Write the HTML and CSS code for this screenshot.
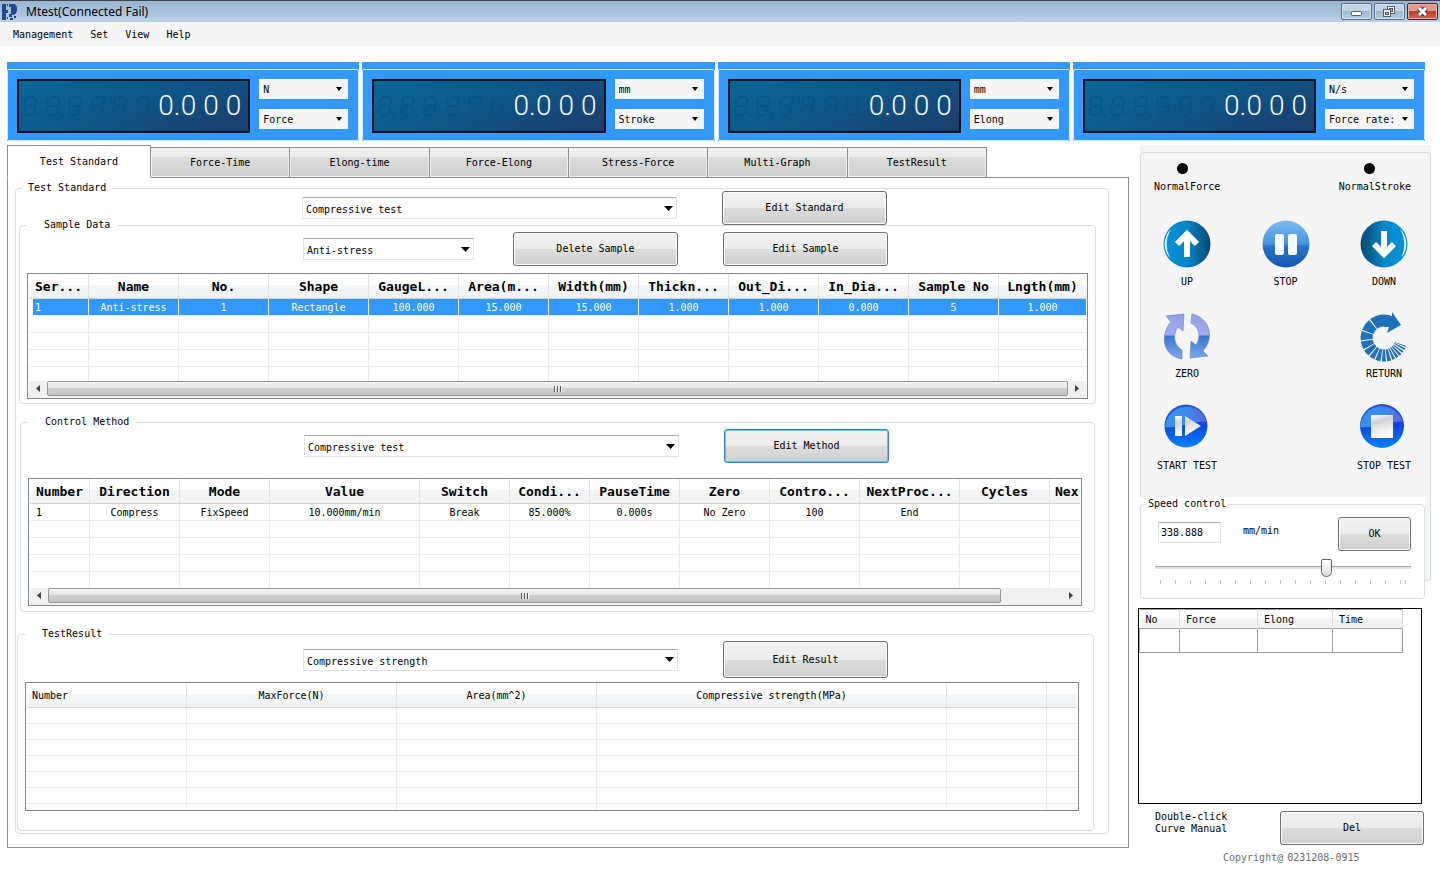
FILE: index.html
```html
<!DOCTYPE html>
<html lang="en">
<head>
  <meta charset="utf-8">
  <title>Mtest(Connected Fail)</title>
  <link rel="stylesheet" href="styles.css">
</head>
<body>

  <!-- shared shapes -->
  <svg class="defs" width="0" height="0" aria-hidden="true">
    <defs>
      <linearGradient id="teal" x1="0" x2="1"><stop offset="0" stop-color="#0795dc"/><stop offset=".5" stop-color="#0586c6"/><stop offset="1" stop-color="#07486f"/></linearGradient>
      <linearGradient id="tealBack" x1="1" x2="0"><stop offset="0" stop-color="#0795dc"/><stop offset=".5" stop-color="#0586c6"/><stop offset="1" stop-color="#07486f"/></linearGradient>
      <linearGradient id="sky" x1="0" y1="0" x2="0" y2="1"><stop offset="0" stop-color="#7dbcf2"/><stop offset=".5" stop-color="#4a92dc"/><stop offset=".55" stop-color="#2b74c9"/><stop offset="1" stop-color="#1558ac"/></linearGradient>
      <linearGradient id="royal" x1="0" y1="0" x2="0" y2="1"><stop offset="0" stop-color="#2a55d8"/><stop offset=".5" stop-color="#0b46dc"/><stop offset="1" stop-color="#0a84fa"/></linearGradient>
      <linearGradient id="gloss" x1="0" y1="0" x2="1" y2="0"><stop offset="0" stop-color="#3a93f0"/><stop offset=".6" stop-color="#3f86ea"/><stop offset="1" stop-color="#5b63de"/></linearGradient>
      <linearGradient id="silver" x1="0" y1="0" x2=".3" y2="1"><stop offset="0" stop-color="#ffffff"/><stop offset=".35" stop-color="#d2d4d4"/><stop offset=".6" stop-color="#e2e4e6"/><stop offset="1" stop-color="#ffffff"/></linearGradient>
      <linearGradient id="lilac" gradientUnits="userSpaceOnUse" x1="0" y1="0" x2="0" y2="48"><stop offset="0" stop-color="#8f9fea"/><stop offset=".48" stop-color="#a5acee"/><stop offset=".5" stop-color="#3878cf"/><stop offset="1" stop-color="#86abea"/></linearGradient>
    </defs>
    <symbol id="unlit" viewBox="0 0 20 22">
      <g fill="none" stroke="#0a4f7d" stroke-width="2">
        <path d="M4 2h8M3 11h8M2 20h8M2 3l-.5 7M13 3l-.5 7M1.500 12l-.5 7M12 12l-.5 7"/>
      </g>
      <circle cx="16" cy="20" r="1.500" fill="#0a4f7d"/>
    </symbol>
  </svg>

  <header class="titlebar">
    <svg class="logo" viewBox="0 0 16 16"><path fill="#24478f" d="M0 0h4v6h2v3H4v7H0zM7 0h4c3 0 4 2 4 5s-1 6-5 6v2H7v-3h2V3H7zM5 0h1v2H5zM5 13h1v2H5zM8 14h3v2H8zM12 12h2v2h-2z"/></svg>
    <h1 class="title">Mtest(Connected Fail)</h1>
    <div class="window-buttons">
      <button class="win" aria-label="Minimize"><svg viewBox="0 0 29 15"><rect x="9.500" y="7.500" width="10" height="4" rx="1" fill="#fff" stroke="#555e6c"/></svg></button>
      <button class="win" aria-label="Restore"><svg viewBox="0 0 29 15"><g fill="#fff" stroke="#555e6c"><rect x="12.500" y="2.500" width="7" height="7"/><rect x="14.500" y="4.500" width="3" height="3" fill="#9db6d0"/><rect x="8.500" y="5.500" width="7" height="7"/><rect x="10.500" y="8.500" width="3" height="2" fill="#9db6d0"/></g></svg></button>
      <button class="win close" aria-label="Close"><svg viewBox="0 0 29 15"><path d="M11 4l7 7M18 4l-7 7" stroke="#4b3b45" stroke-width="5"/><path d="M11 4l7 7M18 4l-7 7" stroke="#fff" stroke-width="3"/></svg></button>
    </div>
  </header>

  <nav class="menu">
    <a href="#">Management</a>
    <a href="#">Set</a>
    <a href="#">View</a>
    <a href="#">Help</a>
  </nav>

  <section class="meters">
    <div class="meter">
      <div class="meter-body">
        <div class="lcd">
          <svg><use href="#unlit"/></svg><svg><use href="#unlit"/></svg><svg><use href="#unlit"/></svg><svg><use href="#unlit"/></svg><svg><use href="#unlit"/></svg><svg><use href="#unlit"/></svg>
          <span>0.</span><span>0</span><span>0</span><span>0</span>
        </div>
        <div class="meter-selects">
          <select aria-label="Force unit"><option>N</option></select>
          <select aria-label="Channel 1"><option>Force</option></select>
        </div>
      </div>
    </div>
    <div class="meter">
      <div class="meter-body">
        <div class="lcd">
          <svg><use href="#unlit"/></svg><svg><use href="#unlit"/></svg><svg><use href="#unlit"/></svg><svg><use href="#unlit"/></svg><svg><use href="#unlit"/></svg><svg><use href="#unlit"/></svg>
          <span>0.</span><span>0</span><span>0</span><span>0</span>
        </div>
        <div class="meter-selects">
          <select aria-label="Stroke unit"><option>mm</option></select>
          <select aria-label="Channel 2"><option>Stroke</option></select>
        </div>
      </div>
    </div>
    <div class="meter">
      <div class="meter-body">
        <div class="lcd">
          <svg><use href="#unlit"/></svg><svg><use href="#unlit"/></svg><svg><use href="#unlit"/></svg><svg><use href="#unlit"/></svg><svg><use href="#unlit"/></svg><svg><use href="#unlit"/></svg>
          <span>0.</span><span>0</span><span>0</span><span>0</span>
        </div>
        <div class="meter-selects">
          <select aria-label="Elong unit"><option>mm</option></select>
          <select aria-label="Channel 3"><option>Elong</option></select>
        </div>
      </div>
    </div>
    <div class="meter">
      <div class="meter-body">
        <div class="lcd">
          <svg><use href="#unlit"/></svg><svg><use href="#unlit"/></svg><svg><use href="#unlit"/></svg><svg><use href="#unlit"/></svg><svg><use href="#unlit"/></svg><svg><use href="#unlit"/></svg>
          <span>0.</span><span>0</span><span>0</span><span>0</span>
        </div>
        <div class="meter-selects">
          <select aria-label="Rate unit"><option>N/s</option></select>
          <select aria-label="Channel 4"><option>Force rate:</option></select>
        </div>
      </div>
    </div>
  </section>

  <div class="content">
    <main>
      <div class="tabs">
        <button class="tab active">Test Standard</button>
        <button class="tab">Force-Time</button>
        <button class="tab">Elong-time</button>
        <button class="tab">Force-Elong</button>
        <button class="tab">Stress-Force</button>
        <button class="tab">Multi-Graph</button>
        <button class="tab">TestResult</button>
      </div>

      <div class="tab-page">
        <fieldset class="group standard">
          <legend>Test Standard</legend>
          <div class="row">
            <div class="pick"><select class="wide" aria-label="Test standard"><option>Compressive test</option></select></div>
            <button class="btn">Edit Standard</button>
          </div>

          <fieldset class="group sample">
            <legend>Sample Data</legend>
            <div class="row">
              <div class="pick">
                <select class="narrow" aria-label="Sample"><option>Anti-stress</option></select>
                <button class="btn">Delete Sample</button>
              </div>
              <button class="btn">Edit Sample</button>
            </div>
            <div class="list">
              <div class="view">
                <table>
                  <colgroup><col class="w60"><col class="w90"><col class="w90"><col class="w100"><col class="w90"><col class="w90"><col class="w90"><col class="w90"><col class="w90"><col class="w90"><col class="w90"><col></colgroup>
                  <tr><th>Ser...</th><th>Name</th><th>No.</th><th>Shape</th><th>GaugeL...</th><th>Area(m...</th><th>Width(mm)</th><th>Thickn...</th><th>Out_Di...</th><th>In_Dia...</th><th>Sample No</th><th>Lngth(mm)</th></tr>
                  <tr class="selected"><td>1</td><td>Anti-stress</td><td>1</td><td>Rectangle</td><td>100.000</td><td>15.000</td><td>15.000</td><td>1.000</td><td>1.000</td><td>0.000</td><td>5</td><td>1.000</td></tr>
                  <tr><td></td><td></td><td></td><td></td><td></td><td></td><td></td><td></td><td></td><td></td><td></td><td></td></tr>
                  <tr><td></td><td></td><td></td><td></td><td></td><td></td><td></td><td></td><td></td><td></td><td></td><td></td></tr>
                  <tr><td></td><td></td><td></td><td></td><td></td><td></td><td></td><td></td><td></td><td></td><td></td><td></td></tr>
                  <tr><td></td><td></td><td></td><td></td><td></td><td></td><td></td><td></td><td></td><td></td><td></td><td></td></tr>
                </table>
              </div>
              <div class="scrollbar">
                <svg viewBox="0 0 18 15"><path d="M11 4v7L7 7.500z"/></svg>
                <div class="track"><div class="thumb full"><i></i><i></i><i></i></div></div>
                <svg viewBox="0 0 18 15"><path d="M7 4v7l4-3.500z"/></svg>
              </div>
            </div>
          </fieldset>

          <fieldset class="group method">
            <legend>Control Method</legend>
            <div class="row">
              <div class="pick"><select class="wide" aria-label="Control method"><option>Compressive test</option></select></div>
              <button class="btn focused">Edit Method</button>
            </div>
            <div class="list">
              <div class="view">
                <table>
                  <colgroup><col class="w60"><col class="w90"><col class="w90"><col class="w150"><col class="w90"><col class="w80"><col class="w90"><col class="w90"><col class="w90"><col class="w100"><col class="w90"><col></colgroup>
                  <tr><th>Number</th><th>Direction</th><th>Mode</th><th>Value</th><th>Switch</th><th>Condi...</th><th>PauseTime</th><th>Zero</th><th>Contro...</th><th>NextProc...</th><th>Cycles</th><th class="cut">Nex</th></tr>
                  <tr><td>1</td><td>Compress</td><td>FixSpeed</td><td>10.000mm/min</td><td>Break</td><td>85.000%</td><td>0.000s</td><td>No Zero</td><td>100</td><td>End</td><td></td><td></td></tr>
                  <tr><td></td><td></td><td></td><td></td><td></td><td></td><td></td><td></td><td></td><td></td><td></td><td></td></tr>
                  <tr><td></td><td></td><td></td><td></td><td></td><td></td><td></td><td></td><td></td><td></td><td></td><td></td></tr>
                  <tr><td></td><td></td><td></td><td></td><td></td><td></td><td></td><td></td><td></td><td></td><td></td><td></td></tr>
                  <tr><td></td><td></td><td></td><td></td><td></td><td></td><td></td><td></td><td></td><td></td><td></td><td></td></tr>
                </table>
              </div>
              <div class="scrollbar">
                <svg viewBox="0 0 18 15"><path d="M11 4v7L7 7.500z"/></svg>
                <div class="track"><div class="thumb"><i></i><i></i><i></i></div></div>
                <svg viewBox="0 0 18 15"><path d="M7 4v7l4-3.500z"/></svg>
              </div>
            </div>
          </fieldset>

          <fieldset class="group result">
            <legend>TestResult</legend>
            <div class="row">
              <div class="pick"><select class="wide" aria-label="Test result"><option>Compressive strength</option></select></div>
              <button class="btn">Edit Result</button>
            </div>
            <div class="list">
              <div class="view">
                <table>
                  <colgroup><col class="w160"><col class="w210"><col class="w200"><col class="w350"><col class="w100"><col></colgroup>
                  <tr><th>Number</th><th>MaxForce(N)</th><th>Area(mm^2)</th><th>Compressive strength(MPa)</th><th></th><th></th></tr>
                  <tr><td></td><td></td><td></td><td></td><td></td><td></td></tr>
                  <tr><td></td><td></td><td></td><td></td><td></td><td></td></tr>
                  <tr><td></td><td></td><td></td><td></td><td></td><td></td></tr>
                  <tr><td></td><td></td><td></td><td></td><td></td><td></td></tr>
                  <tr><td></td><td></td><td></td><td></td><td></td><td></td></tr>
                  <tr><td></td><td></td><td></td><td></td><td></td><td></td></tr>
                  <tr><td></td><td></td><td></td><td></td><td></td><td></td></tr>
                </table>
              </div>
            </div>
          </fieldset>
        </fieldset>
      </div>
    </main>

    <aside>
      <section class="controls">
        <div class="controls-box">
          <div class="lamps">
            <div class="lamp"><i></i>NormalForce</div>
            <div class="lamp"><i></i>NormalStroke</div>
          </div>
          <div class="actions">
            <button class="action">
              <svg viewBox="0 0 48 48"><circle cx="24" cy="24" r="23.500" fill="url(#teal)"/><path d="M8 9a21 21 0 0 0-1 29a30 30 0 0 1 1-29z" fill="#e8f6ff"/><path d="M24 14v23M14 24l10-10 10 10" fill="none" stroke="#fff" stroke-width="6"/></svg>
              UP
            </button>
            <button class="action">
              <svg viewBox="0 0 48 48"><circle cx="24" cy="24" r="23.500" fill="url(#sky)"/><rect x="13" y="14" width="9" height="21" rx="2" fill="#f4faff"/><rect x="26" y="14" width="9" height="21" rx="2" fill="#f4faff"/></svg>
              STOP
            </button>
            <button class="action">
              <svg viewBox="0 0 48 48"><circle cx="24" cy="24" r="23.500" fill="url(#tealBack)"/><path d="M40 9a21 21 0 0 1 1 29a30 30 0 0 0-1-29z" fill="#e8f6ff"/><path d="M24 11v23M14 24l10 10 10-10" fill="none" stroke="#fff" stroke-width="6"/></svg>
              DOWN
            </button>

            <button class="action">
              <svg viewBox="0 0 48 48"><g fill="url(#lilac)" stroke="#6b8ad6" stroke-width=".7"><path d="M3 4l18-2-1 17-5-4c-5 6-5 18 4 23v9C-1 44-3 22 8 10z"/><path d="M29 2c18 4 23 24 11 37l5 5-18 2 1-17 5 4c5-7 4-18-5-22z"/></g></svg>
              ZERO
            </button>
            <span></span>
            <button class="action">
              <svg viewBox="0 0 48 48"><path d="M29 9.200A17.500 17.500 0 1 0 40.500 32" fill="none" stroke="#1f72ba" stroke-width="12" stroke-dasharray="16 1 9 1 7 1 6 1 5 1 4 1 4 1 3 1 3 1 2 1 2 1 2 1 1.500 1 1.500 1"/><path d="M32 0l9 13-14 8 2-6h-5V4h8z" fill="#1f72ba"/></svg>
              RETURN
            </button>

            <button class="action">
              <svg viewBox="0 0 48 48"><circle cx="23" cy="22" r="21.500" fill="url(#royal)"/><path d="M2 23a21.500 21.500 0 0 1 42-5c-14-2-26 7-42 5z" fill="url(#gloss)"/><path d="M12 12h7v20h-7zM22 12l16 10-16 10z" fill="url(#silver)"/></svg>
              START TEST
            </button>
            <span></span>
            <button class="action">
              <svg viewBox="0 0 48 48"><circle cx="22" cy="22" r="22" fill="url(#royal)"/><path d="M0 23a22 22 0 0 1 43-5c-14-2-27 7-43 5z" fill="url(#gloss)"/><path d="M11 11h22v23H11z" fill="url(#silver)"/></svg>
              STOP TEST
            </button>
          </div>
        </div>
      </section>

      <section class="speed">
        <fieldset class="group">
          <legend>Speed control</legend>
          <div class="speed-row">
            <input type="text" id="speed" value="338.888">
            <label for="speed">mm/min</label>
            <button class="btn small">OK</button>
          </div>
          <input type="range" class="slider" aria-label="Speed" min="0" max="500" value="339">
          <div class="ticks"></div>
        </fieldset>
      </section>

      <div class="history">
        <table>
          <colgroup><col class="c-no"><col class="c-force"><col class="c-elong"><col></colgroup>
          <tr><th>No</th><th>Force</th><th>Elong</th><th>Time</th></tr>
          <tr><td></td><td></td><td></td><td></td></tr>
        </table>
      </div>

      <div class="history-foot">
        <p>Double-click<br>Curve Manual</p>
        <button class="btn">Del</button>
      </div>
      <footer><span>Copyright@</span><span>0231208-0915</span></footer>
    </aside>
  </div>

</body>
</html>
```
FILE: styles.css
```css
* {
  box-sizing: border-box;
}

body {
  margin: 0;
  background: #fff;
  color: #000;
  font: 10px/14px "DejaVu Sans Mono", "Liberation Mono", monospace;
}

button,
select,
input {
  font: inherit;
  color: inherit;
  margin: 0;
}

.defs {
  position: absolute;
}

/* title bar */
.titlebar {
  display: flex;
  align-items: center;
  height: 22px;
  padding: 0 2px;
  border-top: 1px solid #3c4654;
  background: linear-gradient(#9ab4cf, #b9d1ea);
}

.logo {
  width: 16px;
  height: 16px;
}

.title {
  flex: 1;
  margin: 0 0 0 8px;
  font: 12px/20px "Noto Sans", "Open Sans", sans-serif;
}

.window-buttons {
  display: flex;
  gap: 2px;
}

.win {
  width: 31px;
  height: 17px;
  padding: 0;
  border: 1px solid #56708f;
  border-radius: 2px;
  background: linear-gradient(#c3d4e6 50%, #9fb9d3 50%, #b5cde4);
  box-shadow: inset 0 0 0 1px #d5e2ef;
}

.win svg {
  display: block;
}

.win.close {
  border-color: #541f26;
  background: linear-gradient(#dd9a8e 45%, #b8402b 50%, #cf6a4c);
  box-shadow: inset 0 0 0 1px #e5b0a5;
}

.menu {
  display: flex;
  gap: 17px;
  padding: 6px 13px 4px;
  background: #f5f5f5;
}

.menu a {
  color: #000;
  text-decoration: none;
}

/* meters */
.meters {
  display: grid;
  grid-template-columns: repeat(4, 1fr);
  gap: 3px;
  padding: 16px 15px 4px 7px;
}

.meter {
  padding-top: 7px;
  background: #3399ff;
}

.meter-body {
  display: flex;
  gap: 9px;
  padding: 9px 10px 7px 9px;
  border: 1px solid #d3e9ff;
  border-radius: 2px;
}

.lcd {
  flex: 1;
  display: grid;
  grid-template-columns: repeat(10, 1fr);
  align-items: center;
  height: 54px;
  padding: 0 0 0 4px;
  border: 2px solid #06121f;
  background: linear-gradient(160deg, #076796, #0e5587 50%, #1d3c6c);
}

.lcd svg {
  width: 20px;
  height: 22px;
  opacity: .6;
}

.lcd span {
  color: #f2fbff;
  font: 300 28px/50px Roboto, sans-serif;
}

.meter-selects {
  display: flex;
  flex-direction: column;
  gap: 10px;
}

/* drop-downs */
select {
  appearance: none;
  border: 0;
  border-radius: 0;
  background: #fff url("data:image/svg+xml,%3Csvg xmlns='http://www.w3.org/2000/svg' width='9' height='5'%3E%3Cpath d='M0 0h9L4.500 5z'/%3E%3C/svg%3E") no-repeat right 3px center;
}

.meter-selects select {
  width: 89px;
  height: 20px;
  padding: 1px 18px 0 4px;
  background-color: #f5f5f5;
  background-size: 6px 4px;
  background-position: right 6px center;
}

.wide,
.narrow {
  height: 22px;
  padding: 4px 16px 0 3px;
  border: 1px solid #dfe2e8;
  border-top-color: #abadb3;
  border-radius: 1px;
}

.wide {
  width: 375px;
}

.narrow {
  width: 171px;
}

/* buttons */
.btn {
  width: 165px;
  height: 34px;
  padding: 0;
  border: 1px solid #707070;
  border-radius: 3px;
  background: linear-gradient(#f2f2f2, #ebebeb 50%, #dddddd 50%, #cfcfcf);
  box-shadow: inset 0 0 0 1px #fbfbfb;
}

.btn.focused {
  border-color: #3c7fb1;
  box-shadow: inset 0 0 0 1px #48d0f4;
}

.btn.small {
  width: 73px;
}

/* page columns */
.content {
  display: grid;
  grid-template-columns: minmax(0, 1fr) 293px;
  gap: 9px;
  align-items: start;
  padding: 0 9px 0 7px;
}

.tabs {
  position: relative;
  z-index: 1;
  display: flex;
  align-items: flex-end;
  width: 980px;
  height: 33px;
}

.tab {
  flex: 1;
  height: 31px;
  padding: 0;
  border: 1px solid #8c8e94;
  border-left-width: 0;
  background: linear-gradient(#f3f3f3, #ebebeb 30%, #dcdcdc 30%, #cfcfcf);
  box-shadow: inset 0 0 0 1px #f0f0f0;
}

.tab.active {
  flex: 0 0 144px;
  height: 33px;
  border-left-width: 1px;
  border-bottom-color: #fff;
  background: #fff;
  box-shadow: none;
}

.tab-page {
  margin-top: -1px;
  padding: 3px 19px 13px 7px;
  border: 1px solid #8c8e94;
}

/* group boxes */
.group {
  min-width: 0;
  margin: 0;
  padding: 0 7px;
  border: 1px solid #d5dfe5;
  border-radius: 4px;
}

.group legend {
  padding: 0 7px 0 17px;
}

.standard {
  padding: 0 0 2px;
}

.standard > legend {
  margin-left: 6px;
  padding: 0 6px;
}

.row {
  display: flex;
  align-items: center;
  gap: 45px;
  padding-left: 276px;
}

.standard > .row {
  position: relative;
  margin: -4px 0 -7px;
  padding-left: 286px;
}

.pick {
  display: flex;
  align-items: center;
  justify-content: space-between;
  width: 375px;
}

.sample {
  margin: 0 12px 0 3px;
  padding-bottom: 4px;
}

.method {
  margin: 11px 13px 0 4px;
  padding: 0 12px 5px 7px;
}

.result {
  margin: 15px 14px 0 1px;
  padding: 0 14px 19px 7px;
}

.result .row {
  padding-left: 278px;
}

/* list views */
.list {
  margin-top: 7px;
  padding: 0 1px;
  border: 1px solid #828790;
}

.method .list {
  margin-top: 15px;
}

.result .list {
  margin-top: 4px;
}

.result .btn {
  height: 37px;
}

.view {
  height: 107px;
  overflow: hidden;
}

.method .view {
  height: 109px;
}

.result .view {
  height: 127px;
}

.list table {
  width: 100%;
  table-layout: fixed;
  border-collapse: separate;
  border-spacing: 0;
}

.list th {
  height: 25px;
  padding: 2px 0 0;
  border-right: 1px solid #e3e4e6;
  border-bottom: 1px solid #d5d5d5;
  background: linear-gradient(#fff 45%, #f5f6f8 45%, #f1f2f4);
  font-size: 13px;
  white-space: nowrap;
}

.list .cut {
  padding-left: 5px;
  text-align: left;
}

.list td {
  height: 17px;
  padding: 1px 0 0;
  border-right: 1px solid #ececec;
  border-bottom: 1px solid #ececec;
  line-height: 15px;
  text-align: center;
}

.list td:first-child {
  padding-left: 6px;
  text-align: left;
}

.list tr :last-child {
  border-right: 0;
}

.result .list th {
  font-size: 10px;
  font-weight: normal;
}

.result .list th:first-child {
  padding-left: 5px;
  text-align: left;
}

.result .list td {
  height: 16px;
}

.selected td {
  background: #3399ff;
  color: #fff;
}

.list .selected td:first-child {
  padding-left: 2px;
  border-left: 4px solid #fff;
}

.w60 { width: 60px; }
.w80 { width: 80px; }
.w90 { width: 90px; }
.w100 { width: 100px; }
.w150 { width: 150px; }
.w160 { width: 160px; }
.w200 { width: 200px; }
.w210 { width: 210px; }
.w350 { width: 350px; }

.scrollbar {
  display: flex;
  height: 17px;
  padding-bottom: 2px;
  background: #f0f0f0;
}

.scrollbar svg {
  width: 18px;
  height: 15px;
  fill: #404040;
}

.track {
  flex: 1;
}

.thumb {
  display: flex;
  align-items: center;
  justify-content: center;
  gap: 1px;
  width: 94%;
  height: 15px;
  border: 1px solid #979797;
  border-radius: 2px;
  background: linear-gradient(#f4f4f4, #e6e6e6 45%, #cfcfcf 50%, #c6c6c6);
}

.thumb.full {
  width: 100%;
}

.thumb i {
  width: 2px;
  height: 6px;
  border-left: 1px solid #5a5a5a;
  background: #fafafa;
}

/* machine controls */
.controls {
  margin-left: 2px;
  padding-top: 7px;
  background: #f5f5f5;
}

.controls-box {
  padding: 10px 0 107px;
  border: 1px solid #d5dbe3;
  border-radius: 4px;
}

.lamps {
  display: flex;
  justify-content: space-between;
  padding: 0 19px 0 13px;
}

.lamp {
  display: flex;
  flex-direction: column;
  align-items: center;
  gap: 6px;
}

.lamp i {
  width: 11px;
  height: 11px;
  margin-right: 10px;
  border-radius: 50%;
  background: #000;
}

.actions {
  display: grid;
  grid-template-columns: 92px 1fr 92px;
  row-gap: 23px;
  margin-top: 26px;
}

.action {
  display: flex;
  flex-direction: column;
  align-items: center;
  gap: 7px;
  padding: 0;
  border: 0;
  background: none;
}

.action svg {
  width: 48px;
  height: 48px;
  overflow: visible;
}

.speed {
  position: relative;
  margin: -84px 6px 0 2px;
  background: #fff;
}

.speed .group {
  padding: 0 13px 14px 14px;
}

.speed legend {
  margin-left: -9px;
  padding: 0 2px;
}

.speed-row {
  display: flex;
  align-items: flex-start;
  padding: 6px 0 0 3px;
}

.speed-row label {
  padding-top: 7px;
}

.speed-row input {
  width: 63px;
  height: 21px;
  margin: 5px 22px 0 0;
  padding: 0 2px;
  border: 1px solid #dfe6ec;
  border-top-color: #abadb3;
}

.speed-row .btn {
  margin-left: auto;
}

.slider {
  appearance: none;
  display: block;
  width: 100%;
  height: 18px;
  margin-top: 8px;
  background: linear-gradient(#a0a0a0, #a0a0a0) 0 7px / 100% 1px no-repeat, linear-gradient(#e3e3e3, #e3e3e3) 0 8px / 100% 2px no-repeat;
}

.slider::-webkit-slider-thumb {
  appearance: none;
  width: 11px;
  height: 18px;
  border: 1px solid #5f6468;
  border-radius: 2px 2px 6px 6px;
  background: linear-gradient(#fff, #dcdcdc);
}

.ticks {
  height: 4px;
  margin: 3px 5px 0;
  background: linear-gradient(#c4c4c4, #c4c4c4) right / 1px 100% no-repeat, repeating-linear-gradient(90deg, #c4c4c4 0 1px, transparent 1px 15px);
}

/* history */
.history {
  min-height: 196px;
  margin: 9px 9px 0 0;
  padding-right: 18px;
  border: 1px solid #000;
}

.history table {
  width: 100%;
  table-layout: fixed;
  border-collapse: collapse;
}

.history th {
  height: 19px;
  padding: 2px 0 0 6px;
  border-top: 1px solid #a0a0a0;
  border-right: 1px solid #dcdcdc;
  background: linear-gradient(#fff 45%, #f4f5f7 45%, #f1f2f4);
  font-weight: normal;
  text-align: left;
}

.history td {
  height: 24px;
  border: 1px solid #a0a0a0;
}

.c-no { width: 40px; }
.c-force { width: 78px; }
.c-elong { width: 75px; }

.history-foot {
  display: flex;
  justify-content: space-between;
  align-items: flex-start;
  padding: 7px 7px 0 17px;
}

.history-foot p {
  margin: 0;
  line-height: 12px;
}

.history-foot .btn {
  width: 144px;
}

footer {
  display: flex;
  gap: 4px;
  margin-top: 6px;
  padding-left: 85px;
  color: #6d6d6d;
}
```
